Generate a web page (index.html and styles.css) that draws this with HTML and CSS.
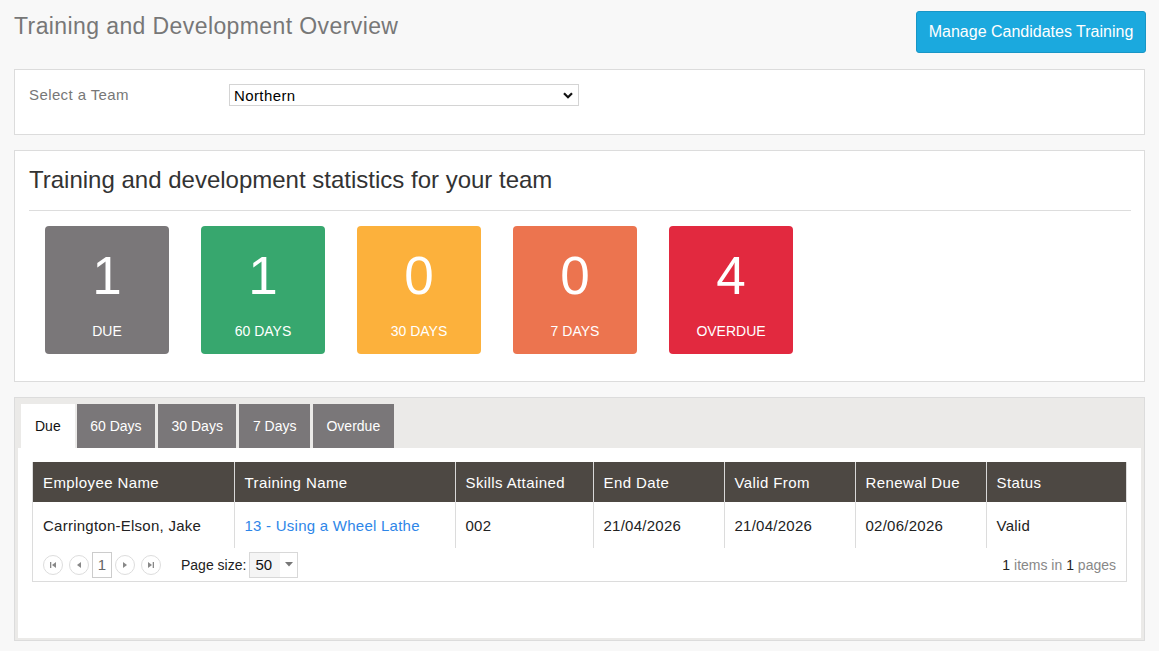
FILE: index.html
```html
<!DOCTYPE html>
<html lang="en">
<head>
<meta charset="utf-8">
<title>Training and Development Overview</title>
<link rel="stylesheet" href="styles.css">
</head>
<body>
<div class="page">
  <header class="page-header">
    <h1 class="page-title">Training and Development Overview</h1>
    <button class="btn-primary" type="button">Manage Candidates Training</button>
  </header>

  <section class="panel team-panel">
    <div class="form-row">
      <label class="form-label" for="team">Select a Team</label>
      <div class="select-wrap">
        <select id="team" class="team-select">
          <option>Northern</option>
          <option>Southern</option>
          <option>Eastern</option>
          <option>Western</option>
        </select>
        <svg class="select-chevron" width="10" height="7" viewBox="0 0 10 7" aria-hidden="true"><path d="M1 1.2 L5 5.2 L9 1.2" fill="none" stroke="#111" stroke-width="2.2"/></svg>
      </div>
    </div>
  </section>

  <section class="panel stats-panel">
    <h2 class="stats-title">Training and development statistics for your team</h2>
    <hr class="divider">
    <div class="tiles">
      <div class="tile tile-due"><div class="tile-num">1</div><div class="tile-label">DUE</div></div>
      <div class="tile tile-60"><div class="tile-num">1</div><div class="tile-label">60 DAYS</div></div>
      <div class="tile tile-30"><div class="tile-num">0</div><div class="tile-label">30 DAYS</div></div>
      <div class="tile tile-7"><div class="tile-num">0</div><div class="tile-label">7 DAYS</div></div>
      <div class="tile tile-over"><div class="tile-num">4</div><div class="tile-label">OVERDUE</div></div>
    </div>
  </section>

  <section class="tabstrip">
    <ul class="tabs">
      <li class="tab active">Due</li>
      <li class="tab">60 Days</li>
      <li class="tab">30 Days</li>
      <li class="tab">7 Days</li>
      <li class="tab">Overdue</li>
    </ul>
    <div class="tab-content">
      <div class="grid">
        <table class="grid-table">
          <colgroup>
            <col class="c1"><col class="c2"><col class="c3"><col class="c4"><col class="c5"><col class="c6"><col class="c7">
          </colgroup>
          <thead>
            <tr>
              <th>Employee Name</th>
              <th>Training Name</th>
              <th>Skills Attained</th>
              <th>End Date</th>
              <th>Valid From</th>
              <th>Renewal Due</th>
              <th>Status</th>
            </tr>
          </thead>
          <tbody>
            <tr>
              <td>Carrington-Elson, Jake</td>
              <td><a class="link" href="#">13 - Using a Wheel Lathe</a></td>
              <td>002</td>
              <td>21/04/2026</td>
              <td>21/04/2026</td>
              <td>02/06/2026</td>
              <td>Valid</td>
            </tr>
          </tbody>
        </table>
        <div class="pager">
          <div class="pager-nav">
            <span class="pg-btn"><svg width="8" height="8" viewBox="0 0 8 8"><rect x="1" y="1" width="1.3" height="6" fill="#888"/><path d="M7 1 L3 4 L7 7 Z" fill="#888"/></svg></span>
            <span class="pg-btn"><svg width="8" height="8" viewBox="0 0 8 8"><path d="M6 1 L2 4 L6 7 Z" fill="#888"/></svg></span>
            <span class="pg-current">1</span>
            <span class="pg-btn"><svg width="8" height="8" viewBox="0 0 8 8"><path d="M2 1 L6 4 L2 7 Z" fill="#888"/></svg></span>
            <span class="pg-btn"><svg width="8" height="8" viewBox="0 0 8 8"><path d="M1 1 L5 4 L1 7 Z" fill="#888"/><rect x="5.7" y="1" width="1.3" height="6" fill="#888"/></svg></span>
            <span class="pg-size-label">Page size:</span>
            <span class="pg-size">
              <span class="pg-size-val">50</span>
              <span class="pg-size-arrow"><svg width="8" height="5" viewBox="0 0 8 5"><path d="M0 0 L8 0 L4 4.5 Z" fill="#777"/></svg></span>
            </span>
          </div>
          <div class="pager-info"><b>1</b> items in <b>1</b> pages</div>
        </div>
      </div>
    </div>
  </section>
</div>
</body>
</html>
```
FILE: styles.css
```css
* { box-sizing: border-box; }
html, body { margin: 0; padding: 0; }
body {
  background: #f8f8f8;
  font-family: "Liberation Sans", Arial, Helvetica, sans-serif;
  color: #222;
}
.page { padding: 0 14px 10px 14px; }

.page-header {
  display: flex;
  justify-content: space-between;
  align-items: flex-start;
  padding-top: 11px;
  margin-bottom: 16px;
}
.page-title {
  margin: 2px 0 0 0;
  font-size: 23px;
  line-height: 26px;
  letter-spacing: 0.4px;
  font-weight: normal;
  color: #777;
}
.btn-primary {
  width: 230px;
  height: 42px;
  margin-right: -1px;
  background: #1ba9de;
  border: 1px solid #1896c6;
  border-radius: 3px;
  color: #fff;
  font-family: inherit;
  font-size: 16px;
  padding: 0 10px;
}

.panel {
  background: #fff;
  border: 1px solid #dcdcdc;
  margin-bottom: 15px;
}

.team-panel { padding: 14px 14px 28px 14px; }
.form-row { display: flex; align-items: flex-start; }
.form-label {
  width: 200px;
  font-size: 15px;
  line-height: 22px;
  letter-spacing: 0.4px;
  color: #777;
}
.select-wrap { position: relative; width: 350px; height: 22px; }
.team-select {
  appearance: none;
  -webkit-appearance: none;
  width: 100%;
  height: 100%;
  border: 1px solid #d4d4d4;
  background: #fff;
  font-family: inherit;
  font-size: 15px;
  letter-spacing: 0.4px;
  color: #000;
  padding: 0 0 0 4px;
  border-radius: 0;
  margin: 0;
}
.select-chevron { position: absolute; right: 6px; top: 8px; pointer-events: none; }

.stats-panel { padding: 15px 14px 27px 14px; }
.stats-title {
  margin: 0;
  font-size: 24px;
  line-height: 27px;
  font-weight: normal;
  color: #333;
}
.divider {
  border: 0;
  border-top: 1px solid #dddddd;
  margin: 17px -1px 15px 0;
  height: 0;
}
.tiles { display: flex; gap: 32px; padding-left: 16px; }
.tile {
  width: 124px;
  height: 128px;
  border-radius: 4px;
  color: #fff;
  text-align: center;
  padding-top: 20px;
}
.tile-num { font-size: 53px; line-height: 60px; }
.tile-label { font-size: 14px; line-height: 16px; margin-top: 17px; }
.tile-due { background: #7a7779; }
.tile-60 { background: #37a76e; }
.tile-30 { background: #fcb13c; }
.tile-7 { background: #ec744f; }
.tile-over { background: #e2293f; }

.tabstrip {
  background: #ebeae8;
  border: 1px solid #dcdcdc;
  padding: 6px 3px 2px 3px;
}
.tabs {
  list-style: none;
  margin: 0;
  padding: 0 0 0 3px;
  display: flex;
  gap: 3px;
}
.tab {
  height: 44px;
  line-height: 44px;
  padding: 0 13.5px;
  background: #7a7779;
  color: #fff;
  font-size: 14px;
}
.tab.active { background: #fff; color: #111; padding: 0 14px; margin-right: -1px; }
.tab-content {
  background: #fff;
  padding: 14px 14px 56px 14px;
}
.grid { border: 1px solid #dcdcdc; border-top: 0; }
.grid-table {
  width: 100%;
  border-collapse: collapse;
  table-layout: fixed;
  font-size: 15px;
}
.c1 { width: 201px; }
.c2 { width: 221px; }
.c3 { width: 138px; }
.c4 { width: 131px; }
.c5 { width: 131px; }
.c6 { width: 131px; }
.grid-table th {
  background: #4d4843;
  color: #fff;
  font-weight: normal;
  text-align: left;
  height: 40px;
  padding: 0 10px;
  letter-spacing: 0.4px;
  border-left: 1px solid #d8d8d8;
}
.grid-table th:first-child { border-left: 0; }
.grid-table td {
  height: 46px;
  padding: 0 10px;
  letter-spacing: 0.25px;
  border-left: 1px solid #dcdcdc;
  color: #222;
}
.grid-table td:first-child { border-left: 0; }
.link { color: #2e86e8; text-decoration: none; }

.pager {
  display: flex;
  justify-content: space-between;
  align-items: center;
  height: 33px;
  padding: 0 10px 0 10px;
}
.pager-nav { display: flex; align-items: center; }
.pg-btn {
  width: 20px;
  height: 20px;
  border: 1px solid #dddddd;
  border-radius: 50%;
  display: flex;
  align-items: center;
  justify-content: center;
  margin-right: 6px;
}
.pg-btn svg { display: block; }
.pg-current {
  width: 20px;
  height: 26px;
  border: 1px solid #cccccc;
  font-size: 15px;
  color: #666;
  display: flex;
  align-items: center;
  justify-content: center;
  margin: 0 3px 0 -3px;
}
.pg-size-label { font-size: 14px; color: #222; margin-left: 14px; margin-right: 3px; }
.pg-size {
  display: flex;
  width: 49px;
  height: 26px;
  border: 1px solid #d8d8d8;
}
.pg-size-val {
  width: 30px;
  background: #f5f5f5;
  font-size: 15px;
  line-height: 24px;
  padding-left: 5px;
  color: #111;
}
.pg-size-arrow {
  flex: 1;
  display: flex;
  align-items: center;
  justify-content: center;
  background: #fff;
}
.pager-info { font-size: 14px; color: #888; }
.pager-info b { font-weight: normal; color: #222; }
```
